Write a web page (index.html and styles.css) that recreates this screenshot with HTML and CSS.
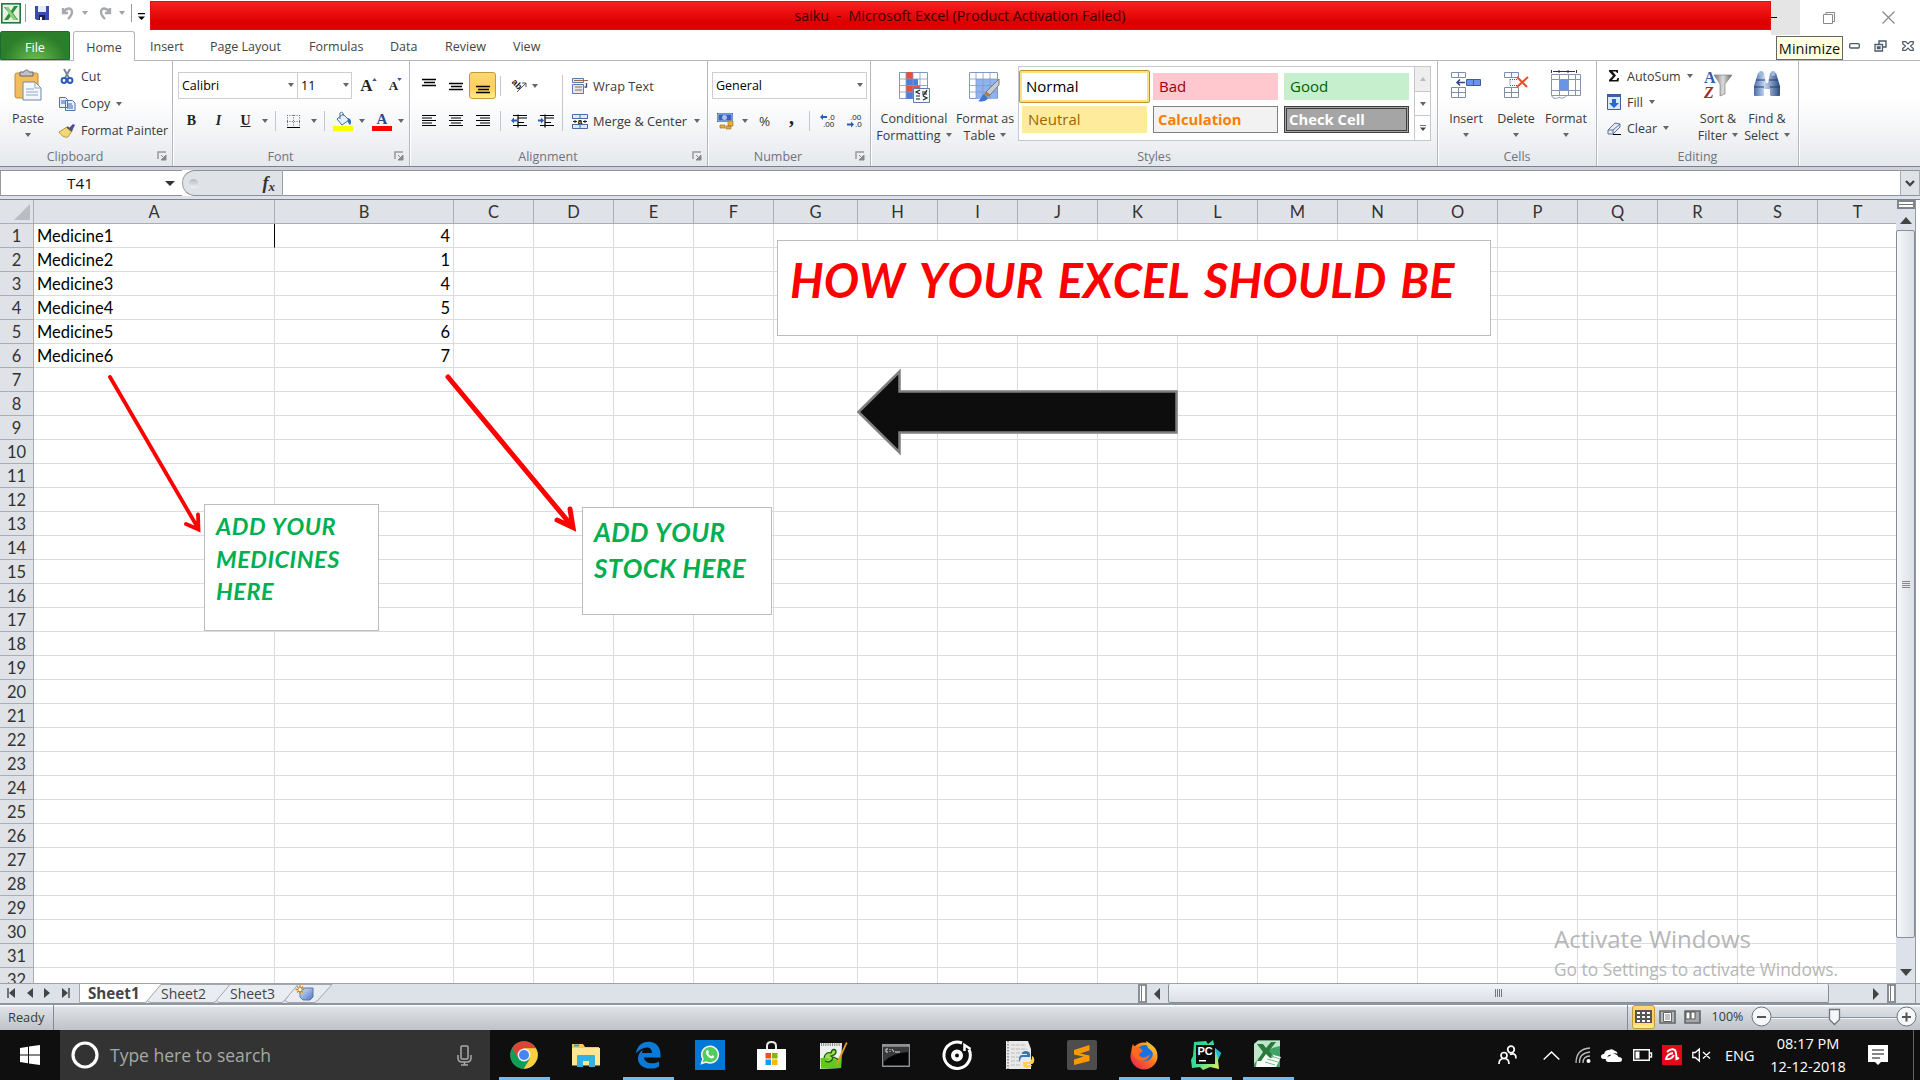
FILE: index.html
```html
<!DOCTYPE html>
<html lang="en">
<head>
<meta charset="utf-8">
<title>saiku - Microsoft Excel</title>
<link rel="stylesheet" href="styles.css">
</head>
<body>
<svg class="defs" width="0" height="0">
  <defs>
    <symbol id="caret" viewBox="0 0 6 4"><path d="M0 0h6L3 4z" fill="#666"/></symbol>
    <symbol id="launcher" viewBox="0 0 10 10"><path d="M1 8V1h8" fill="none" stroke="#999" stroke-width="1.500"/><path d="M9 4v5H4z M4 4l3 3" fill="#888" stroke="#888"/></symbol>
    <linearGradient id="blue" x1="0" y1="0" x2="1" y2="1"><stop offset="0" stop-color="#dbe8fb"/><stop offset="1" stop-color="#4a76c9"/></linearGradient>
    <linearGradient id="steel" x1="0" y1="0" x2="1" y2="0"><stop offset="0" stop-color="#4a6ca8"/><stop offset=".4" stop-color="#c4d6f2"/><stop offset="1" stop-color="#2d4a82"/></linearGradient>
    <linearGradient id="metal" x1="0" y1="0" x2="1" y2="0"><stop offset="0" stop-color="#777"/><stop offset=".5" stop-color="#ddd"/><stop offset="1" stop-color="#666"/></linearGradient>
    <linearGradient id="fox" x1="0" y1="1" x2="1" y2="0"><stop offset="0" stop-color="#e3195c"/><stop offset=".5" stop-color="#ff6a1e"/><stop offset="1" stop-color="#ffe232"/></linearGradient>
    <linearGradient id="pyc" x1="0" y1="0" x2="1" y2="1"><stop offset="0" stop-color="#1fd68c"/><stop offset=".5" stop-color="#3ddc97"/><stop offset="1" stop-color="#f6f24b"/></linearGradient>
  </defs>
</svg>

<header class="titlebar">
  <div class="quick">
    <svg width="20" height="21" viewBox="0 0 20 21"><rect x=".8" y=".8" width="18.400" height="19" fill="#e6f3e4" stroke="#1f7a3c" stroke-width="1.600"/><path d="M3 4h4l3 4 3-5h4l-5 7 5 7h-4l-3-4-3 4H3l5-7z" fill="#2c8f3c"/><path d="M12 17L4 4h3l9 13z" fill="#8fd07f"/></svg>
    <i class="qsep"></i>
    <svg width="14" height="14" viewBox="0 0 14 14"><path d="M0 0h14v14H1.500L0 12.500z" fill="#3a4bb0"/><path d="M3 0h8v6H3z" fill="#e8ecf8"/><path d="M4 9h6v5H4z" fill="#1d2142"/><path d="M5 11h2v3H5z" fill="#fff"/></svg>
    <svg class="undo" width="14" height="14" viewBox="0 0 14 14"><path d="M2 2v5h5M2.500 6.500C5 1.500 11 1 11 6c0 3-2 5-4 7" fill="none" stroke="#a6a9ad" stroke-width="2.400"/></svg>
    <svg class="c1" width="6" height="4"><use href="#caret" opacity=".6"/></svg>
    <svg class="redo" width="14" height="14" viewBox="0 0 14 14"><path d="M12 2v5H7M11.500 6.500C9 1.500 3 1 3 6c0 3 2 5 4 7" fill="none" stroke="#a6a9ad" stroke-width="2.400"/></svg>
    <svg class="c2" width="6" height="4"><use href="#caret" opacity=".6"/></svg>
    <i class="qsep"></i>
    <svg class="c3" width="7" height="7" viewBox="0 0 8 8"><path d="M0 0h8v1.500H0zM0 4h8L4 8z" fill="#000"/></svg>
  </div>
  <div class="caption">saiku&nbsp; -&nbsp; Microsoft Excel (Product Activation Failed)</div>
  <div class="wincontrols">
    <svg class="min" width="29" height="35"><path d="M0 17.500h6" stroke="#000"/></svg>
    <svg class="restore" width="14" height="14" viewBox="0 0 14 14"><path d="M1.500 3.500h9v9h-9zM4 3.500v-2h8.500v9h-2" fill="none" stroke="#888"/></svg>
    <svg width="13" height="13" viewBox="0 0 13 13"><path d="M.5.500l12 12M12.500.500l-12 12" stroke="#888" stroke-width="1.200"/></svg>
  </div>
</header>

<nav class="tabs">
  <span class="file">File</span>
  <span class="tab home">Home</span>
  <span class="tab t-insert">Insert</span>
  <span class="tab t-layout">Page Layout</span>
  <span class="tab t-form">Formulas</span>
  <span class="tab t-data">Data</span>
  <span class="tab t-review">Review</span>
  <span class="tab">View</span>
  <div class="bookctl">
    <span class="tip">Minimize</span>
    <svg width="11" height="6" viewBox="0 0 11 6"><rect x=".7" y=".7" width="9.600" height="4.300" rx="1" fill="#fff" stroke="#4b5a6b" stroke-width="1.300"/></svg>
    <svg class="r" width="13" height="12" viewBox="0 0 13 12"><path d="M5 4V1h7v6H9" fill="none" stroke="#4b5a6b" stroke-width="1.400"/><path d="M1 4.500h7.500V11H1zM3.500 7h2.500v1.500H3.500z" fill="#fff" stroke="#4b5a6b" stroke-width="1.300"/></svg>
    <svg width="12" height="10" viewBox="0 0 12 10"><path d="M.7.700h3L6 3 8.300.700h3v2L8.500 5l2.800 2.500v1.800h-3L6 7 3.700 9.300h-3V7.500L3.500 5 .7 2.700z" fill="#fff" stroke="#4b5a6b" stroke-width="1.200"/></svg>
  </div>
</nav>

<section class="ribbon">
  <div class="group g-clip">
    <div class="body">
      <div class="big paste">
        <svg width="28" height="31" viewBox="0 0 28 31"><rect x="1" y="3" width="23" height="25" rx="2" fill="#f2bd5e" stroke="#c08a35"/><path d="M6 2h4c0-2.500 5-2.500 5 0h4v4H6z" fill="#bfc3c8" stroke="#666"/><path d="M9 12h12l6 6v12H9z" fill="#f4f8fe" stroke="#6f87a8"/><path d="M21 12v6h6M12 19h8M12 22h12M12 25h12" fill="none" stroke="#8ea6c6"/></svg>
        <span>Paste</span><svg width="6" height="4"><use href="#caret"/></svg>
      </div>
      <div class="list l-clip">
        <div><svg width="17" height="15" viewBox="0 0 17 15"><path d="M5 0l5 9M11 0L6 9" stroke="#7b8898" stroke-width="2"/><circle cx="5" cy="11.500" r="2.400" fill="none" stroke="#2a5bb5" stroke-width="2"/><circle cx="11" cy="11.500" r="2.400" fill="none" stroke="#2a5bb5" stroke-width="2"/></svg><span>Cut</span></div>
        <div><svg width="17" height="14" viewBox="0 0 17 14"><path d="M.5.500h6l2 2v8h-8zM6.500 3.500h7l2.500 2.500v7.500H6.500z" fill="#e7f0fc" stroke="#4a74b5"/><path d="M2 4h4M2 6h4M8 7h5M8 9h6M8 11h6" stroke="#3a67b5"/></svg><span>Copy</span><svg width="6" height="4"><use href="#caret"/></svg></div>
        <div><svg width="17" height="14" viewBox="0 0 17 14"><path d="M10 4l4-4 2 1-3 6z" fill="#4b4f9a"/><path d="M0 8l8-5 5 4-4 6c-4 1-7-2-9-5z" fill="#f0d876" stroke="#b59a3c"/><path d="M8 3l5 4" stroke="#555" stroke-width="2"/></svg><span>Format Painter</span></div>
      </div>
    </div>
    <div class="label"><span>Clipboard</span><svg width="10" height="10"><use href="#launcher"/></svg></div>
  </div>

  <div class="group g-font">
    <div class="rows">
      <div class="row"><div class="combo fname"><span>Calibri</span><svg width="6" height="4"><use href="#caret"/></svg></div><div class="combo fsize"><span>11</span><svg width="6" height="4"><use href="#caret"/></svg></div>
        <span class="slot w28 serif grow">A<svg width="5" height="3" viewBox="0 0 6 4"><path d="M0 4h6L3 0z" fill="#2a5bb5"/></svg></span><span class="slot w28 serif shrink">A<svg width="5" height="3" viewBox="0 0 6 4"><path d="M0 0h6L3 4z" fill="#2a5bb5"/></svg></span></div>
      <div class="row"><span class="slot w27 serif">B</span><span class="slot w27 serif it">I</span><span class="slot w27 serif un">U</span><span class="slot w12"><svg width="6" height="4"><use href="#caret"/></svg></span><i class="vsep"></i>
        <span class="slot w27"><svg width="13" height="13" viewBox="0 0 13 13"><path d="M0 .5h13M0 6.500h13M.5 0v12M6.500 0v12M12.500 0v12" stroke="#666" stroke-dasharray="1 1.400"/><path d="M0 12.500h13" stroke="#000"/></svg></span><span class="slot w14"><svg width="6" height="4"><use href="#caret"/></svg></span><i class="vsep"></i>
        <span class="slot w27"><svg width="20" height="19" viewBox="0 0 20 19"><path d="M4 7l6-5 6 6-7 5z" fill="#e4edf8" stroke="#4a6fa8"/><path d="M7 7V1c2-2 4 0 3 3" fill="none" stroke="#4a6fa8"/><path d="M15 6c3 1 4 4 2 7-2-2-3-4-2-7z" fill="#2f66c4"/><path d="M0 14h20v5H0z" fill="#ff0"/></svg></span><span class="slot w12"><svg width="6" height="4"><use href="#caret"/></svg></span>
        <span class="slot w27"><svg width="20" height="19" viewBox="0 0 20 19"><text x="10" y="12" text-anchor="middle" class="bluea">A</text><path d="M0 14h20v5H0z" fill="red"/></svg></span><span class="slot w12"><svg width="6" height="4"><use href="#caret"/></svg></span></div>
    </div>
    <div class="label"><span>Font</span><svg width="10" height="10"><use href="#launcher"/></svg></div>
  </div>

  <div class="group g-align">
    <div class="body">
      <div class="rows">
        <div class="row">
          <span class="slot w27"><svg width="14" height="14" viewBox="0 0 14 14"><path d="M0 .5h14M2 3.500h11M0 6.500h14" stroke="#000" stroke-width="1.300"/></svg></span>
          <span class="slot w27"><svg width="14" height="14" viewBox="0 0 14 14"><path d="M0 4.500h14M2 7.500h11M0 10.500h14" stroke="#000" stroke-width="1.300"/></svg></span>
          <span class="slot w27 on"><svg width="14" height="14" viewBox="0 0 14 14"><path d="M0 7.500h14M2 10.500h11M0 13.500h14" stroke="#000" stroke-width="1.300"/></svg></span>
          <i class="vsep"></i>
          <span class="slot w27"><svg width="16" height="15" viewBox="0 0 16 15"><text x="0" y="7" class="ab" transform="rotate(45 3 6)">ab</text><path d="M6 14l9-9M11 5h4v4" fill="none" stroke="#555"/></svg></span><svg width="6" height="4"><use href="#caret"/></svg>
        </div>
        <div class="row">
          <span class="slot w27"><svg width="14" height="12"><path d="M0 .5h14M0 3h10M0 5.500h14M0 8h10M0 10.500h14" stroke="#000"/></svg></span>
          <span class="slot w27"><svg width="14" height="12"><path d="M0 .5h14M2 3h10M0 5.500h14M2 8h10M0 10.500h14" stroke="#000"/></svg></span>
          <span class="slot w27"><svg width="14" height="12"><path d="M0 .5h14M4 3h10M0 5.500h14M4 8h10M0 10.500h14" stroke="#000"/></svg></span>
          <i class="vsep"></i>
          <span class="slot w27"><svg width="16" height="14"><path d="M2 1.500h14M7 4h9M7 8.500h6M2 11.500h14M7 .5v13" stroke="#000" stroke-width="1.200"/><path d="M0 6.500l3-3v2h3v2H3v2z" fill="#2a5bb5"/></svg></span>
          <span class="slot w27"><svg width="16" height="14"><path d="M2 1.500h14M7 4h9M7 8.500h6M2 11.500h14M7 .5v13" stroke="#000" stroke-width="1.200"/><path d="M6 6.500l-3-3v2H0v2h3v2z" fill="#2a5bb5"/></svg></span>
        </div>
      </div>
      <i class="tallsep"></i>
      <div class="rows wraps">
        <div class="row"><svg width="16" height="16" viewBox="0 0 16 16"><path d="M.5.500h11v4H.5zM.5 6.500h11v9H.5z" fill="#dfe9f7" stroke="#5b7cae"/><path d="M2 2.500h14M3 9h7M3 12h7" stroke="#a5653c" stroke-width="1.200"/><path d="M14.500 5v4h-2" fill="none" stroke="#2f4f86" stroke-width="1.300"/></svg><span>Wrap Text</span></div>
        <div class="row"><svg width="16" height="15" viewBox="0 0 16 15"><path d="M.5.500h15v14H.5zM0 4.500h16M0 10.500h16M8 0v4.500M8 10.500V15" fill="#dfe9f7" stroke="#4a6da3"/><path d="M0 5h16v5H0z" fill="#fff"/><path d="M1 7.500h4M3 6v3M11 7.500h4M13 6v3" stroke="#222"/><text x="8" y="10" text-anchor="middle" class="mini">a</text></svg><span>Merge &amp; Center</span><svg width="6" height="4"><use href="#caret"/></svg></div>
      </div>
    </div>
    <div class="label"><span>Alignment</span><svg width="10" height="10"><use href="#launcher"/></svg></div>
  </div>

  <div class="group g-num">
    <div class="rows">
      <div class="row"><div class="combo gen"><span>General</span><svg width="6" height="4"><use href="#caret"/></svg></div></div>
      <div class="row"><span class="slot w27"><svg width="17" height="16" viewBox="0 0 17 16"><path d="M0 0h16v9H0z" fill="#3a64b8"/><path d="M1 1h14v7H1z" fill="none" stroke="#a9c2ea"/><circle cx="7.500" cy="4.500" r="2.500" fill="#a9c2ea"/><path d="M11 8h5v5h-5zM3 12h5v3H3zM9 13h5v3H9z" fill="#e3b03c" stroke="#9a6c16" stroke-width=".6"/></svg></span><span class="slot w12b"><svg width="6" height="4"><use href="#caret"/></svg></span><span class="slot w27 pct">%</span><span class="slot w27 serif com">,</span><i class="vsep"></i>
        <span class="slot w27"><svg width="16" height="14" viewBox="0 0 16 14"><text x="8" y="6" class="dec">.0</text><text x="3" y="13" class="dec">.00</text><path d="M0 3l3-3v2h4v2H3v2z" fill="#2a5bb5"/></svg></span><span class="slot w27"><svg width="16" height="14" viewBox="0 0 16 14"><text x="3" y="6" class="dec">.00</text><text x="8" y="13" class="dec">.0</text><path d="M7 10.500l-3-3v2H0v2h4v2z" fill="#2a5bb5"/></svg></span></div>
    </div>
    <div class="label"><span>Number</span><svg width="10" height="10"><use href="#launcher"/></svg></div>
  </div>

  <div class="group g-styles">
    <div class="body">
      <div class="big cond">
        <svg width="31" height="31" viewBox="0 0 31 31"><path d="M.5.500h28v26H.5z" fill="#fff" stroke="#7e9ac4"/><path d="M7 0h7v7H7zM7 13h14v7H7z" fill="#e9503c"/><path d="M7 7h12v6H7zM7 20h7v7H7z" fill="#4d7fd6"/><path d="M0 7h29M0 13.500h29M0 20h29M7 0v27M14 0v27M21 0v27" stroke="#7e9ac4" stroke-width=".8"/><path d="M14.500 16.500h16v14h-16z" fill="#f5f8fd" stroke="#5d7aa9"/><path d="M21 18l-4 2 4 2M17 24h4M17 27h4M23 20h5M23 22h5M24 24l4 2-4 2M28 18l-4 6" stroke="#222" stroke-width="1.200" fill="none"/></svg>
        <span>Conditional</span><span>Formatting <svg width="6" height="4"><use href="#caret"/></svg></span>
      </div>
      <div class="big fat">
        <svg width="32" height="31" viewBox="0 0 32 31"><path d="M.5.500h28v26H.5z" fill="#fff" stroke="#7e9ac4"/><path d="M7 7h21v20H7z" fill="#8fb3f0"/><path d="M0 7h29M0 13.500h29M0 20h29M7 0v27M14 0v27M21 0v27" stroke="#7e9ac4" stroke-width=".8"/><path d="M30 7v6L21 23l-4-3z" fill="#c7ccd4" stroke="#777"/><path d="M17 20l4 3-1 2-5-3z" fill="#b4783a"/><path d="M15 22l4 4c-2 4-7 4-10 3 3-1 3-5 6-7z" fill="#3f77cc"/></svg>
        <span>Format as</span><span>Table <svg width="6" height="4"><use href="#caret"/></svg></span>
      </div>
      <div class="gallery">
        <div class="swatches">
          <span class="sw normal">Normal</span><span class="sw bad">Bad</span><span class="sw good">Good</span>
          <span class="sw neutral">Neutral</span><span class="sw calc">Calculation</span><span class="sw check">Check Cell</span>
        </div>
        <div class="scroller"><span class="dis"><svg width="6" height="4" viewBox="0 0 6 4"><path d="M0 4h6L3 0z" fill="#bbb"/></svg></span><span><svg width="6" height="4"><use href="#caret"/></svg></span><span><svg width="6" height="6" viewBox="0 0 7 7"><path d="M0 0h7v1H0zM0 3h7L3.500 7z" fill="#444"/></svg></span></div>
      </div>
    </div>
    <div class="label nolaunch"><span>Styles</span></div>
  </div>

  <div class="group g-cells">
    <div class="body">
      <div class="big"><svg width="32" height="29" viewBox="0 0 32 29"><path d="M1.500 2.500h14v5h-14zM8.500 2.500v5M1.500 17.500h14v10h-14zM8.500 17.500v10M1.500 22.500h14" fill="#fff" stroke="#7d8ea8"/><path d="M16.500 9.500h14v6h-14z" fill="#6a95e6" stroke="#3a5f9e"/><path d="M23.500 9v7" stroke="#3a5f9e"/><path d="M7 12.500h8M10 9.500l-3 3 3 3" fill="none" stroke="#2e4c7c" stroke-width="1.500"/></svg><span>Insert</span><svg width="6" height="4"><use href="#caret"/></svg></div>
      <div class="big"><svg width="32" height="29" viewBox="0 0 32 29"><path d="M4.500 2.500h14v5h-14zM11.500 2.500v5M4.500 17.500h14v10h-14zM11.500 17.500v10M4.500 22.500h14" fill="#fff" stroke="#7d8ea8"/><path d="M10 9.500h8M10 9.500v6h8" fill="none" stroke="#3a5f9e" stroke-dasharray="1 1"/><path d="M17 7l10 10M28 7L17 17" stroke="#ee4b2b" stroke-width="2"/></svg><span>Delete</span><svg width="6" height="4"><use href="#caret"/></svg></div>
      <div class="big"><svg width="32" height="29" viewBox="0 0 32 29"><path d="M1.500 4.500h29v21h-29z" fill="#fff" stroke="#8496b3"/><path d="M1 9.500h30M1 20.500h30M9.500 5v20M18.500 5v20M25.500 5v20" stroke="#8496b3"/><path d="M10 10h8v10h-8z" fill="#6a95e6"/><path d="M1.500 0v3M26.500 0v3M3 1.500h22M9 0v3M18 0v3" stroke="#333"/><path d="M2 26c0 3 6 3 7 1 2 2 6 1 7-1" fill="#fff" stroke="#8496b3"/></svg><span>Format</span><svg width="6" height="4"><use href="#caret"/></svg></div>
    </div>
    <div class="label nolaunch"><span>Cells</span></div>
  </div>

  <div class="group g-edit">
    <div class="body">
      <div class="list l-edit">
        <div><svg width="14" height="12" viewBox="0 0 14 12"><path d="M2 0h9v3h-1L9 1.500H5.500L9 5.500 5 10h4.500l1-2H12l-.5 3.500H2V10l4-4.300L2 1.500z" fill="#111"/></svg><span>AutoSum</span><svg width="6" height="4"><use href="#caret"/></svg></div>
        <div><svg width="14" height="16" viewBox="0 0 14 16"><path d="M.5.500h13v15H.5z" fill="#dde9fb" stroke="#3c5f9d"/><path d="M0 0h14v3H0z" fill="#3c5f9d"/><path d="M5 5h4v4h3l-5 5-5-5h3z" fill="#2b67d0"/></svg><span>Fill</span><svg width="6" height="4"><use href="#caret"/></svg></div>
        <div><svg width="14" height="13" viewBox="0 0 14 13"><path d="M1 8l7-7 5 1v3l-7 7H1z" fill="#e3ebf7" stroke="#5f7396"/><path d="M1 8h5l7-6M6 8v4" stroke="#5f7396" fill="none"/><path d="M6 12.500h8" stroke="#000"/></svg><span>Clear</span><svg width="6" height="4"><use href="#caret"/></svg></div>
      </div>
      <div class="big sort"><svg width="30" height="29" viewBox="0 0 30 29"><text x="1" y="13" class="az-a">A</text><text x="1" y="28" class="az-z">Z</text><path d="M11 5h18l-7 9v10l-5 2V14z" fill="url(#metal)" stroke="#777" stroke-width=".6"/></svg><span>Sort &amp;</span><span>Filter <svg width="6" height="4"><use href="#caret"/></svg></span></div>
      <div class="big"><svg width="28" height="29" viewBox="0 0 28 29"><path d="M5 3h6l2 10h2l2-10h6l4 13v9q0 1-1 1h-8q-1 0-1-1v-6h-6v6q0 1-1 1H2q-1 0-1-1v-9z" fill="url(#steel)"/><path d="M3 10h9M16 10h9M1 17h10M17 17h10" stroke="#23406f"/><circle cx="8" cy="3.500" r="2.500" fill="#9db7e0"/><circle cx="20" cy="3.500" r="2.500" fill="#9db7e0"/></svg><span>Find &amp;</span><span>Select <svg width="6" height="4"><use href="#caret"/></svg></span></div>
    </div>
    <div class="label nolaunch"><span>Editing</span></div>
  </div>
</section>

<div class="formulabar">
  <div class="namebox"><span>T41</span><svg width="10" height="5" viewBox="0 0 10 5"><path d="M0 0h10L5 5z" fill="#333"/></svg></div>
  <div class="fxzone"><i></i><span>f<sub>x</sub></span></div>
  <div class="finput"></div>
  <div class="fexpand"><svg width="10" height="7" viewBox="0 0 10 7"><path d="M1 1l4 4 4-4" fill="none" stroke="#444" stroke-width="2.400"/></svg></div>
</div>

<main class="workspace">
  <div class="sheet">
    <div id="grid" class="grid"></div>
    <svg class="shapes" width="1896" height="783" viewBox="0 200 1896 783">
      <path d="M858.500 412L899.500 371.500V391.500H1176.500V432.500H899.500V452.500z" fill="#0d0d0d" stroke="#7f7f7f" stroke-width="2.500"/>
      <g fill="none" stroke="red" stroke-linecap="round">
        <path d="M110 377L198 528M186 524l12.500 5.500L198 514.500" stroke-width="3.800"/>
        <path d="M448 377L572 526M557 520l16 7.500L570 509" stroke-width="5"/>
      </g>
    </svg>
    <div class="note headline">HOW YOUR EXCEL SHOULD BE</div>
    <div class="note meds">ADD YOUR<br>MEDICINES<br>HERE</div>
    <div class="note stock">ADD YOUR<br>STOCK HERE</div>
    <div class="watermark"><b>Activate Windows</b><span>Go to Settings to activate Windows.</span></div>
  </div>
  <div class="vscroll">
    <i class="split"></i>
    <svg class="up" width="12" height="7" viewBox="0 0 12 7"><path d="M0 7h12L6 0z" fill="#444"/></svg>
    <div class="vthumb"><i></i><i></i><i></i><i></i></div>
    <svg class="down" width="12" height="7" viewBox="0 0 12 7"><path d="M0 0h12L6 7z" fill="#444"/></svg>
  </div>
</main>

<div class="sheetbar">
  <div class="navs">
    <svg width="8" height="10" viewBox="0 0 8 10"><path d="M1 0v10" stroke="#444" stroke-width="1.400"/><path d="M8 0v10L2 5z" fill="#444"/></svg>
    <svg width="6" height="10" viewBox="0 0 6 10"><path d="M6 0v10L0 5z" fill="#444"/></svg>
    <svg width="6" height="10" viewBox="0 0 6 10"><path d="M0 0v10L6 5z" fill="#444"/></svg>
    <svg width="8" height="10" viewBox="0 0 8 10"><path d="M7 0v10" stroke="#444" stroke-width="1.400"/><path d="M0 0v10L6 5z" fill="#444"/></svg>
  </div>
  <div class="sheettabs">
    <svg class="tabart" width="256" height="20" viewBox="0 0 256 20">
      <path d="M210 18.500q-6-1-2-5L217 .5h36L238 17q-1 1.500-3 1.500z" fill="#e9ecf0" stroke="#a3a8af"/>
      <path d="M141 18.500q-6-1-2-5L148 .5h71L205 17q-1 1.500-3 1.500z" fill="#e9ecf0" stroke="#a3a8af"/>
      <path d="M72 18.500q-6-1-2-5L79 .5h72L137 17q-1 1.500-3 1.500z" fill="#e9ecf0" stroke="#a3a8af"/>
      <path d="M0 0H82L68 17q-1 1.500-3 1.500H0z" fill="#fff"/><path d="M.5 0v18.500H65q2 0 3-1.500L82 .5" fill="none" stroke="#a3a8af"/>
    </svg>
    <b>Sheet1</b><span>Sheet2</span><span>Sheet3</span>
    <svg class="newsheet" width="19" height="16" viewBox="0 0 19 16"><path d="M4 3h13v9l-3 3H7l-3-3z" fill="url(#blue)" stroke="#5b76a8"/><path d="M4 0v9M-.5 4.500h9M1 1.500l6 6M7 1.500l-6 6" stroke="#dc8a1c" stroke-width="1.300"/><circle cx="4" cy="4.500" r="1.500" fill="#fff"/></svg>
  </div>
  <div class="hscroll">
    <i class="hsplit"></i>
    <svg class="left" width="6" height="12" viewBox="0 0 6 12"><path d="M6 0v12L0 6z" fill="#444"/></svg>
    <div class="hthumb"><i></i><i></i><i></i><i></i></div>
    <svg class="right" width="6" height="12" viewBox="0 0 6 12"><path d="M0 0v12L6 6z" fill="#444"/></svg>
    <i class="hsplit"></i>
  </div>
</div>

<div class="status">
  <span class="ready">Ready</span>
  <div class="views">
    <span class="v on"><svg width="17" height="13"><path d="M0 0h17v13H0z" fill="#555"/><path d="M2 2h3v2H2zM7 2h3v2H7zM12 2h3v2h-3zM2 6h3v2H2zM7 6h3v2H7zM12 6h3v2h-3zM2 10h3v2H2zM7 10h3v2H7zM12 10h3v2h-3z" fill="#fff"/></svg></span>
    <span class="v v2"><svg width="17" height="14"><path d="M1 1h15v12H1z" fill="#b4b8bd" stroke="#666" stroke-width="1.600"/><path d="M4.500 2.500h8v9h-8z" fill="#fff" stroke="#666"/><path d="M6 5h5M6 7h5M6 9h5" stroke="#888"/></svg></span>
    <span class="v"><svg width="17" height="14"><path d="M1 1h15v12H1z" fill="#a4a8ad" stroke="#666" stroke-width="1.600"/><path d="M2 2h4v7H2zM7 2h4v7H7z" fill="#fff" stroke="#555"/></svg></span>
    <span class="pctz">100%</span>
    <svg width="166" height="22" viewBox="0 0 166 22"><path d="M20 11.500h126" stroke="#8a95a3"/><path d="M20 12.500h126" stroke="#eef0f2"/><circle cx="10.500" cy="10.500" r="9.500" fill="#f6f7f8" stroke="#6d7681"/><circle cx="155.500" cy="10.500" r="9.500" fill="#f6f7f8" stroke="#6d7681"/><path d="M6 11h9M151 11h9M155.500 6.500v9" stroke="#555" stroke-width="2"/><path d="M78.500 3.500h10v10l-5 5-5-5z" fill="#f6f7f8" stroke="#6d7681" stroke-width="1.300"/></svg>
  </div>
</div>

<footer class="taskbar">
  <div class="start"><svg width="20" height="20" viewBox="0 0 20 20"><path d="M0 3l8-1.200V9.500H0zM9 1.600L20 0v9.500H9zM0 10.500h8v7.700L0 17zM9 10.500h11V20L9 18.400z" fill="#fff"/></svg></div>
  <div class="search"><svg width="28" height="28" viewBox="0 0 28 28"><circle cx="14" cy="14" r="12" fill="none" stroke="#fff" stroke-width="3.200"/></svg><span>Type here to search</span><svg class="mic" width="15" height="21" viewBox="0 0 15 21"><rect x="4" y="1" width="7" height="13" rx="1" fill="none" stroke="#aaa" stroke-width="1.500"/><path d="M1 10v3q0 4 4 4h5q4 0 4-4v-3M7.500 17v3M4 20h7" fill="none" stroke="#aaa" stroke-width="1.500"/></svg></div>
  <div class="apps">
    <span class="app run"><svg width="28" height="28" viewBox="0 0 28 28"><circle cx="14" cy="14" r="13.700" fill="#4caf50"/><path d="M2.100 7.200A13.700 13.700 0 0 1 25.900 7.200L14 7.500 8 17.500z" fill="#db4437"/><path d="M25.900 7.200A13.700 13.700 0 0 1 13.500 27.700L20 17.500 14 7.200z" fill="#ffcd40"/><path d="M2.100 7.200A13.700 13.700 0 0 0 13.500 27.700L19 19 8 17z" fill="#0f9d58"/><circle cx="14" cy="14" r="6.400" fill="#f1f1f1"/><circle cx="14" cy="14" r="5" fill="#4285f4"/></svg></span>
    <span class="app"><svg width="28" height="24" viewBox="0 0 28 24"><path d="M0 1h11l2 3h14v18H0z" fill="#f5c94d"/><path d="M0 5h28v17.500H0z" fill="#ffe694"/><path d="M2 1.500h5v2H2z" fill="#3ba0c9"/><path d="M5 13q0-1 1-1h16q1 0 1 1v11h-6v-6h-6v6H5z" fill="#35b0e0"/></svg></span>
    <span class="app run"><svg width="26" height="28" viewBox="0 0 26 28"><path d="M1 12.500C2 5 7 .8 13.500.8 21 .8 25.500 6 25.500 13.500v3H9c.3 4 4 5.800 8 5.800 2.700 0 5-.7 7-1.900v5c-2.500 1.500-5.300 2.200-8.500 2.200C8 27.600 3 23.500 3 17.500c0-4 2-7 5.500-8.800-1 1-1.400 2-1.600 3.300h10c0-3.500-1.600-5.600-5-5.600C7.500 6.400 4 8.800 1 12.500z" fill="#0a7ad8"/></svg></span>
    <span class="app"><svg width="30" height="30" viewBox="0 0 30 30"><path d="M0 0h30v30H0z" fill="#0078d7"/><path d="M6.500 23.500l1.400-4.600A8.300 8.300 0 1 1 11.200 22z" fill="#4fce5d" stroke="#f2f2f2" stroke-width="1.500"/><path d="M11.500 10.500q1.500-1.500 2.500 1.500l-.8 1.500q1 2 3 2.800l1.200-1q3 1 1 2.700c-3 2-8-3-7.400-6.500z" fill="#fff"/></svg></span>
    <span class="app"><svg width="29" height="29" viewBox="0 0 29 29"><path d="M10 9V5q0-4 4.500-4T19 5v4" fill="none" stroke="#e8e8e8" stroke-width="2"/><path d="M0 8h29v21H0z" fill="#fff"/><path d="M8.500 12h5.500v5.500H8.500z" fill="#f25022"/><path d="M15 12h5.500v5.500H15z" fill="#7fba00"/><path d="M8.500 18.500h5.500V24H8.500z" fill="#00a4ef"/><path d="M15 18.500h5.500V24H15z" fill="#ffb900"/></svg></span>
    <span class="app"><svg width="29" height="28" viewBox="0 0 29 28"><path d="M1 2h22l-1 25-21 1z" fill="#eef2ee"/><path d="M1.500 17h21L22 27 2 27.500z" fill="#5fc91e"/><path d="M2 3.500h20" stroke="#888" stroke-width="3" stroke-dasharray="1 1.200"/><path d="M5 17c1-5 4-6 7-5 1-5 5-4 5-1s-2 3-5 4c2 2 5 1 7 4M6 20c4 2 7 0 8-3" fill="#9be04a" stroke="#1f5a12" stroke-width="1.300"/><path d="M27 1l1.500 1L19 23l-2 2 .3-3z" fill="#e49a25"/></svg></span>
    <span class="app"><svg width="28" height="23" viewBox="0 0 28 23"><path d="M.7.700h26.600v21.600H.7z" fill="#050505" stroke="#8b929a" stroke-width="1.400"/><path d="M1.500 3h25v5Q10 9 1.500 18z" fill="#3a3a3a"/><path d="M1 2h26" stroke="#aaa" stroke-width="1.500"/><path d="M6 5H4v3h2M8 5v1M8 7v1M10 5l2 3M13 8h5" stroke="#ddd" fill="none"/></svg></span>
    <span class="app"><svg width="31" height="31" viewBox="0 0 31 31"><path d="M20 3a13.200 13.200 0 1 0 7 6.500" fill="none" stroke="#fff" stroke-width="3"/><circle cx="15" cy="15.500" r="4" fill="none" stroke="#fff" stroke-width="4"/><path d="M22.500 11V5l6 4" fill="none" stroke="#fff" stroke-width="2.500"/></svg></span>
    <span class="app"><svg width="28" height="29" viewBox="0 0 28 29"><path d="M0 0h22l3 8v20H0z" fill="#e9e9e9"/><path d="M2 0v28" stroke="#555" stroke-dasharray="1.500 1.500"/><path d="M5 4h14M5 8h16M5 12h14M5 16h8M5 20h8M5 24h10" stroke="#bbb" stroke-dasharray="4 1"/><path d="M20 10q5 0 4 6h-7q-3 0-3 5c-2-2-1-7 2-7h5v-1h-5q0-3 4-3z" fill="#3a76a8"/><path d="M21 27q-5 0-4-6h5q4 0 4-6c3 1 3 7 0 8h-5v1h5q-1 3-5 3z" fill="#ffd341"/></svg></span>
    <span class="app"><svg width="30" height="30" viewBox="0 0 30 30"><rect width="30" height="30" rx="2" fill="#4d4d4d"/><path d="M7 10l15.500-5v5.500L13 13.500l9.500 2V21L7 25v-5.500l9.500-3L7 14.500z" fill="#ff9800"/></svg></span>
    <span class="app run"><svg width="28" height="29" viewBox="0 0 28 29"><circle cx="14" cy="15" r="13.500" fill="url(#fox)"/><circle cx="15" cy="12" r="8" fill="#1373e6"/><path d="M3 3c1 3 4 3 7 4l3 3-4 3c1 5 8 4 11 0-1 8-12 9-16 2C1 12 1 7 3 3z" fill="#ff6a1e"/><path d="M16 0c6 3 9 8 8 15-1-4-3-6-6-8z" fill="#ffb52b"/></svg></span>
    <span class="app run"><svg width="30" height="30" viewBox="0 0 30 30"><path d="M3 2l12-1 2 3 5-4 2 8 6 5-3 7 1 9-9-2-7 3-3-3-8 1-1-8 2-4z" fill="url(#pyc)"/><path d="M24 8l6 5-3 6z" fill="#16b7ee"/><path d="M5 5h19v19H5z" fill="#0b0b0b"/><text x="6.500" y="15" class="pc">PC</text><path d="M8 20h7v1.500H8z" fill="#fff"/></svg></span>
    <span class="app run xl"><svg width="28" height="28" viewBox="0 0 28 28"><path d="M1 4l4-3.500h22V27H1z" fill="#3fa266"/><path d="M1 4l4-3.500h22V6Q12 8 1 24z" fill="#bfe5cc"/><path d="M4 20l9-7 15 4-5 10H3z" fill="#fbfdfb"/><path d="M4 4h6l3 4 5-6h5l-7 9 5 6-4 1-4-4-5 7H4l6-9z" fill="#2b7a3d"/><path d="M12 22l10 3M14 19l11 3M18 16l9 3" stroke="#7ab88e"/></svg></span>
  </div>
  <div class="tray">
    <svg class="people" width="19" height="20" viewBox="0 0 19 20"><g fill="none" stroke="#fff" stroke-width="1.700"><circle cx="13" cy="4.500" r="3.300"/><circle cx="6" cy="10.500" r="3"/><path d="M1 19q0-5.500 5-5.500t5 5.500M12 9.500q6-2.500 6 4"/></g></svg>
    <svg class="chev" width="17" height="9" viewBox="0 0 17 9"><path d="M.7 8.500l7.800-7.500 7.800 7.500" fill="none" stroke="#fff" stroke-width="1.500"/></svg>
    <svg class="wifi" width="16" height="16" viewBox="0 0 16 16"><g fill="none" stroke="#bbb" stroke-width="1.300"><path d="M1 16Q1 2 15 1M4.500 16Q4 6 15 5M8 16q0-7 7-7"/></g><circle cx="13.500" cy="14" r="2" fill="#fff"/></svg>
    <svg class="cloud" width="21" height="13" viewBox="0 0 21 13"><path d="M3 10Q0 10 0 7.500T3 5Q4 1 8 1q3-2 6 1 2 0 2.500 3-3-2-6 1-4-1-4.500 4z" fill="#fff"/><path d="M7 13q-3-1-2-3.500T9 7q2-3 5-2t3.500 3Q21 8 21 10.500T18 13z" fill="#fff"/></svg>
    <svg class="bat" width="19" height="12" viewBox="0 0 19 12"><path d="M.7.700h15.600v10.600H.7zM17 4h1.500v4H17" fill="none" stroke="#fff" stroke-width="1.400"/><path d="M2.500 2.500h4v7h-4z" fill="#fff"/></svg>
    <svg class="avira" width="20" height="20" viewBox="0 0 20 20"><path d="M0 0h20v20H0z" fill="#e2091b"/><path d="M5 7q4-4 8-2 1.500 3 1.500 9l2.500-1M11 8q-6 1-7 6 5 1 8-4" fill="none" stroke="#fff" stroke-width="1.900"/></svg>
    <svg class="snd" width="19" height="14" viewBox="0 0 19 14"><path d="M.8 4.500h2.500l4-3.500v12l-4-3.500H.8zM11 4l7 6.500M18 4l-7 6.500" fill="none" stroke="#fff" stroke-width="1.300"/></svg>
    <span class="lang">ENG</span>
    <span class="clock">08:17 PM<br>12-12-2018</span>
    <svg class="notif" width="20" height="20" viewBox="0 0 20 20"><path d="M0 0h20v17h-7l-3 3-3-3H0z" fill="#fff"/><path d="M4 5h12M4 9h12M4 13h8" stroke="#111" stroke-width="1.200"/></svg>
    <i class="peek"></i>
  </div>
</footer>
<script src="grid.js"></script>
</body>
</html>
```
FILE: styles.css
```css
* { box-sizing: border-box; }
body { margin: 0; width: 1920px; height: 1080px; overflow: hidden; display: flex; flex-direction: column; background: #fff; color: #3b3b3b; font: 12.500px "Open Sans", "Noto Sans", sans-serif; }
svg { display: block; flex: none; overflow: visible; }
.defs { position: absolute; }

.titlebar { height: 31px; display: flex; flex: none; }
.quick { width: 150px; display: flex; align-items: center; padding: 0 0 5px 1px; flex: none; }
.qsep { width: 1px; height: 18px; background: #999; margin: 0 9px 0 4px; }
.undo { margin-left: 12px; }
.c1 { margin-left: 7px; }
.redo { margin-left: 10px; }
.c2 { margin-left: 7px; }
.c2 + .qsep { margin: 0 6px 0 6px; }
.c3 { margin-top: 6px; }
.caption { width: 1621px; height: 29px; margin-top: 1px; flex: none; background: linear-gradient(#fd1f1f, #dc0000 75%); border: 1px solid #e01010; color: #3a0000; text-align: center; font-size: 14.250px; line-height: 27px; padding-right: 1px; }
.wincontrols { flex: 1; display: flex; align-items: flex-start; }
.wincontrols .min { background: #e5e5e5; }
.restore { margin: 11px 46px 0 22px; }
.restore + svg { margin-top: 11px; }

.tabs { height: 30px; flex: none; display: flex; border-bottom: 1px solid #b4b8bd; line-height: 31px; color: #444; position: relative; }
.file { width: 70px; height: 29px; background: radial-gradient(ellipse at 50% 110%, #6cc04a, #2c7e2b 65%); border: 1px solid #1c6b35; border-radius: 2px 2px 0 0; color: #fff; text-align: center; }
.tab { white-space: nowrap; }
.home { width: 62px; height: 30px; margin: 0 15px 0 3px; border: 1px solid #b4b8bd; border-bottom: 0; border-radius: 3px 3px 0 0; background: #fff; text-align: center; }
.t-insert { width: 60px; }
.t-layout { width: 99px; }
.t-form { width: 81px; }
.t-data { width: 55px; }
.t-review { width: 68px; }
.bookctl { margin-left: auto; display: flex; align-items: center; padding-right: 6px; }
.tip { width: 67px; height: 24px; margin: 5px 6px 0 0; border: 1px solid #666; background: #ffffe1; color: #111; font-size: 14.500px; line-height: 23px; text-align: center; z-index: 1; }
.bookctl .r { margin: 0 15px 0 14px; }

.ribbon { height: 106px; flex: none; display: flex; background: linear-gradient(#fff 0, #fff 35%, #f4f5f7 65%, #e5e8ec); border-bottom: 1px solid #7d828a; }
.group { display: flex; flex-direction: column; border-right: 1px solid #b5b9bf; box-shadow: 1px 0 #fff; }
.g-clip { width: 173px; }
.g-font { width: 237px; padding-left: 5px; }
.g-align { width: 298px; padding-left: 5px; }
.g-num { width: 163px; padding-left: 4px; }
.g-styles { width: 567px; }
.g-cells { width: 159px; }
.g-edit { width: 202px; }
.body { display: flex; height: 86px; }
.label { margin-top: auto; height: 19px; display: flex; align-items: center; color: #6d7480; padding: 0 5px 1px 0; }
.label span { flex: 1; text-align: center; padding-right: 11px; }
.label.nolaunch { padding-right: 0; }
.label.nolaunch span { padding-right: 0; }
.g-clip .label span { padding-right: 7px; }
.big { width: 50px; flex: none; padding-top: 9px; display: flex; flex-direction: column; align-items: center; line-height: 17px; white-space: nowrap; }
.big > svg:first-child { margin-bottom: 11px; }
.big > span + svg { margin-top: 6px; }
.big span svg { display: inline-block; vertical-align: 3px; margin-left: 2px; }
.paste { width: 56px; }
.paste > svg:first-child { margin-bottom: 9px; }
.list { display: flex; flex-direction: column; flex: none; }
.list > div { height: 27px; display: flex; align-items: center; }
.list span { margin: 0 6px 0 5px; white-space: nowrap; }
.l-clip { padding: 2px 0 0 3px; }
.l-edit { padding: 2px 0 0 10px; width: 96px; }
.l-edit > div { height: 26px; }
.l-edit span { margin-left: 6px; }
.g-cells .body { padding-left: 3px; }
.sort { margin-right: -1px; }

.rows { padding-top: 7px; display: flex; flex-direction: column; }
.row { height: 35px; display: flex; align-items: center; white-space: nowrap; }
.row + .row { height: 36px; }
.combo { height: 27px; border: 1px solid #ccced2; background: #fff; display: flex; align-items: center; justify-content: space-between; padding: 0 3px 1px 3px; color: #000; }
.fname { width: 120px; }
.fsize { width: 55px; margin-left: -1px; padding-right: 2px; }
.gen { width: 155px; }
.slot { display: flex; align-items: center; justify-content: center; flex: none; }
.w27 { width: 27px; height: 27px; }
.w28 { width: 27px; }
.w12 { width: 12px; }
.w12b { width: 12px; }
.w14 { width: 13px; }
.serif { font: bold 14px "Liberation Serif", serif; color: #222; }
.grow { font-size: 17px; margin-left: 3px; }
.shrink { font-size: 13px; }
.grow svg, .shrink svg { margin: -12px 0 0 -1px; }
.it { font-style: italic; }
.un { text-decoration: underline; }
.com { font-size: 20px; padding-bottom: 8px; }
.pct { font-size: 13.500px; }
.vsep { width: 1px; height: 20px; background: #c3c7cd; margin: 0 4px; flex: none; }
.on { background: linear-gradient(#fbd875, #ffcf5c 60%, #fff08a); border: 1px solid #c39a3b; border-radius: 3px; }
.tallsep { width: 1px; height: 56px; background: #c3c7cd; margin-top: 14px; }
.g-align .body > .rows:first-child { width: 147px; }
.wraps { padding-left: 9px; }
.wraps span { margin: 0 7px 0 5px; font-size: 12.800px; }
.bluea { font: bold 15px "Liberation Serif", serif; fill: #2b4a8b; }
.ab { font: bold 9px "Liberation Sans", sans-serif; fill: #222; }
.mini { font: bold 8px "Liberation Sans", sans-serif; }
.dec { font: 8px "Liberation Sans", sans-serif; fill: #222; }
.az-a { font: bold 16px "Liberation Serif", serif; fill: #2f5db0; }
.az-z { font: italic bold 16px "Liberation Serif", serif; fill: #9b2f2f; }
.pc { font: bold 11px "Liberation Sans", sans-serif; fill: #fff; }

.cond { width: 86px; padding-top: 11px; }
.fat { width: 56px; padding-top: 11px; }
.cond > svg:first-child, .fat > svg:first-child { margin-bottom: 7px; }
.gallery { margin: 5px 0 0 5px; width: 413px; height: 75px; display: flex; flex: none; border: 1px solid #c5c8cc; background: #fff; }
.swatches { width: 395px; display: grid; grid-template-columns: 125px 125px 125px; grid-template-rows: 27px 27px; gap: 6px; padding: 6px 0 0 3px; }
.sw { font-size: 15px; line-height: 26px; padding-left: 6px; }
.normal { margin: -3px -3px; padding: 2px 0 0 6px; border: 1px solid #c2912e; border-radius: 2px; box-shadow: inset 0 0 0 2px #ffe07a; color: #000; }
.bad { background: #ffc7ce; color: #9c0006; }
.good { background: #c6efce; color: #006100; }
.neutral { background: #ffeb9c; color: #9c6500; }
.calc { background: #f2f2f2; color: #fa7d00; border: 1px solid #7f7f7f; font-weight: bold; line-height: 24px; padding-left: 4px; font-size: 14.800px; }
.check { background: #a5a5a5; color: #fff; border: 3px double #3f3f3f; font-weight: bold; line-height: 21px; padding-left: 2px; font-size: 14.800px; }
.scroller { flex: 1; border-left: 1px solid #c5c8cc; display: flex; flex-direction: column; }
.scroller span { flex: 1; display: flex; align-items: center; justify-content: center; border-bottom: 1px solid #c5c8cc; }
.scroller span:last-child { border: 0; }
.scroller .dis { background: #eee; }

.formulabar { height: 33px; flex: none; display: flex; border-bottom: 1px solid #7d828a; padding: 3px 0; background: linear-gradient(#cfd3d9 3px, #fff 3px, #fff 29px, #dde1ec 29px); }
.formulabar > div { border-top: 1px solid #8d939b; border-bottom: 1px solid #8d939b; height: 26px; }
.namebox { width: 182px; display: flex; align-items: center; border-left: 1px solid #999; background: #fff; color: #111; font-size: 15.300px; }
.namebox span { width: 158px; text-align: center; margin-right: 6px; }
.fxzone { width: 101px; background: #dfe2e7; border-radius: 13px 0 0 13px; border: 1px solid #9aa0a8; display: flex; align-items: center; justify-content: space-between; padding: 0 7px 0 6px; }
.fxzone i { width: 9px; height: 9px; border-radius: 50%; background: linear-gradient(#b5b9be, #f1f2f4); }
.fxzone span { font: italic bold 18px/20px "Liberation Serif", serif; color: #333; }
.fxzone sub { font-size: 13px; vertical-align: -2px; line-height: 0; }
.finput { flex: 1; background: #fff; }
.fexpand { width: 20px; background: #dfe2e7; border: 1px solid #a8adb4; display: flex; align-items: center; justify-content: center; }

.workspace { height: 783px; flex: none; display: flex; }
.sheet { width: 1896px; height: 783px; position: relative; overflow: hidden; }
.grid { display: flex; flex-direction: column; font: 16.500px "Lato", sans-serif; color: #000; }
.grow-row { display: flex; height: 24px; flex: none; }
.grow-row > span { flex: none; border-right: 1px solid #dadcdd; border-bottom: 1px solid #dadcdd; line-height: 25.500px; padding: 0 3px; }
.grow-row > .head { background: #dfe2e7; border-color: #a9adb4; color: #333; text-align: center; padding: 0; }
.grow-row > .num { text-align: right; }
.grow-row > .cursor { border-right-color: #000; }
.corner svg { margin: 4px 0 0 14px; }
.shapes { position: absolute; left: 0; top: 0; }
.note { position: absolute; background: #fff; border: 1px solid #bcbcbc; font-family: "Lato", sans-serif; font-style: italic; font-weight: bold; font-kerning: none; color: #00b050; white-space: nowrap; }
.headline { left: 777px; top: 40px; width: 714px; height: 96px; color: red; font-size: 47px; line-height: 78px; padding-left: 12px; letter-spacing: .1px; word-spacing: 3.500px; }
.meds { left: 204px; top: 304px; width: 175px; height: 127px; padding: 5px 0 0 11px; font-size: 23.500px; line-height: 32.500px; letter-spacing: .5px; }
.stock { left: 582px; top: 307px; width: 190px; height: 108px; padding: 6px 0 0 11px; font-size: 26px; line-height: 36px; letter-spacing: .4px; }
.watermark { position: absolute; left: 1554px; top: 723px; color: #b6b6b6; display: flex; flex-direction: column; white-space: nowrap; }
.watermark b { font-weight: normal; font-size: 24px; line-height: 32px; }
.watermark span { font-size: 17.350px; line-height: 28px; }

.vscroll { width: 20px; margin-right: 4px; background: #dde1ea; border-right: 1px solid #9299a3; display: flex; flex-direction: column; align-items: center; }
.split { width: 18px; height: 9px; border: 2px solid #7f858d; background: linear-gradient(#fff 2px, #777 2px, #777 3px, #fff 3px); margin-bottom: 8px; flex: none; }
.vthumb { width: 19px; height: 708px; margin-top: 6px; border: 1px solid #858d98; border-radius: 2px; background: linear-gradient(90deg, #f5f7fa, #dcdfe4); display: flex; flex-direction: column; align-items: center; justify-content: center; gap: 1px; flex: none; }
.vthumb i { width: 8px; height: 1px; background: #888; }
.down { margin-top: 31px; }

.sheetbar { height: 22px; flex: none; display: flex; background: #dde1e8; border-top: 1px solid #9da2a9; border-bottom: 2px solid #8c97a1; }
.navs { width: 79px; display: flex; align-items: center; padding: 0 9px 2px 7px; justify-content: space-between; }
.sheettabs { position: relative; width: 1059px; display: flex; color: #444; font-size: 15px; line-height: 19px; }
.tabart { position: absolute; left: 0; top: 0; }
.sheettabs b, .sheettabs span { position: relative; }
.sheettabs b { width: 82px; padding-left: 9px; font-size: 15.200px; }
.sheettabs span { width: 69px; font-size: 14px; }
.newsheet { position: relative; margin: 1px 0 0 -3px; }
.hscroll { flex: 1; display: flex; align-items: center; margin-right: 4px; border-right: 1px solid #9299a3; }
.hsplit { width: 9px; height: 19px; border: 2px solid #8a8f96; background: linear-gradient(90deg, #fff 1px, #777 1px, #777 2px, #fff 2px); }
.left { margin: 0 8px 0 7px; }
.hthumb { width: 661px; height: 19px; border: 1px solid #858d98; border-top: 0; border-radius: 2px; background: linear-gradient(#f1f4f8, #dcdfe4); display: flex; align-items: center; justify-content: center; gap: 1px; }
.hthumb i { width: 1px; height: 8px; background: #777; }
.right { margin: 0 8px 0 44px; }

.status { height: 25px; flex: none; display: flex; justify-content: space-between; background: linear-gradient(#fff 1px, #dfe2e6 2px, #bfc2c7); }
.ready { width: 54px; padding-left: 8px; line-height: 24px; border-right: 1px solid #858a91; font-size: 12.800px; }
.views { display: flex; align-items: center; border-left: 1px solid #858a91; padding: 0 3px 2px 4px; }
.v { width: 24px; height: 24px; display: flex; align-items: center; justify-content: center; }
.v.on { width: 23px; }
.v2 { margin-right: 1px; }
.pctz { width: 47px; text-align: center; }

.taskbar { height: 50px; flex: none; display: flex; background: #0f0f0f; color: #fff; }
.start { width: 60px; display: flex; align-items: center; justify-content: center; }
.search { width: 430px; background: #333; display: flex; align-items: center; padding: 0 18px 0 11px; color: #a8a8a8; font-size: 17.500px; }
.search span { flex: 1; padding-left: 11px; }
.apps { display: flex; padding-left: 3px; }
.app { width: 62px; height: 50px; display: flex; align-items: center; justify-content: center; }
.app svg { margin-left: -1px; }
.run { background: linear-gradient(#76b9ed, #76b9ed) 6px 47px / 51px 3px no-repeat; }
.xl svg { margin: -3px 2px 0 0; }
.tray { flex: 1; display: flex; align-items: center; }
.people { margin-left: 199px; }
.chev { margin-left: 26px; }
.wifi { margin-left: 15px; }
.cloud { margin-left: 10px; }
.bat { margin-left: 11px; }
.avira { margin-left: 10px; }
.snd { margin-left: 10px; }
.lang { margin-left: 14px; width: 30px; font-size: 14.500px; }
.clock { width: 80px; margin-left: 13px; text-align: center; font-size: 14.500px; line-height: 23px; white-space: nowrap; }
.notif { margin-left: 20px; }
.peek { width: 1px; height: 50px; background: #666; margin-left: 25px; }
```
FILE: grid.js
```js
const widths = [241, 179, 80, 80, 80, 80, 84, 80, 80, 80, 80, 80, 80, 80, 80, 80, 80, 80, 80, 80];
const stock = [4, 1, 4, 5, 6, 7];
const grid = document.getElementById('grid');

function cell(row, width, text, cls) {
  const el = document.createElement('span');
  el.style.width = width + 'px';
  el.className = cls || '';
  el.textContent = text;
  row.appendChild(el);
  return el;
}

for (let r = 0; r <= 32; r++) {
  const row = document.createElement('div');
  row.className = 'grow-row';
  const head = cell(row, 34, r || '', 'head');
  if (r === 0) {
    head.classList.add('corner');
    head.innerHTML = '<svg width="16" height="16"><path d="M16 0v16H0z" fill="#b9bdc2"/></svg>';
  }
  widths.forEach((w, c) => {
    if (r === 0) cell(row, w, String.fromCharCode(65 + c), 'head');
    else if (c === 0) cell(row, w, r <= 6 ? 'Medicine' + r : '', r === 1 ? 'cursor' : '');
    else if (c === 1) cell(row, w, r <= 6 ? stock[r - 1] : '', 'num');
    else cell(row, w, '');
  });
  grid.appendChild(row);
}
```
